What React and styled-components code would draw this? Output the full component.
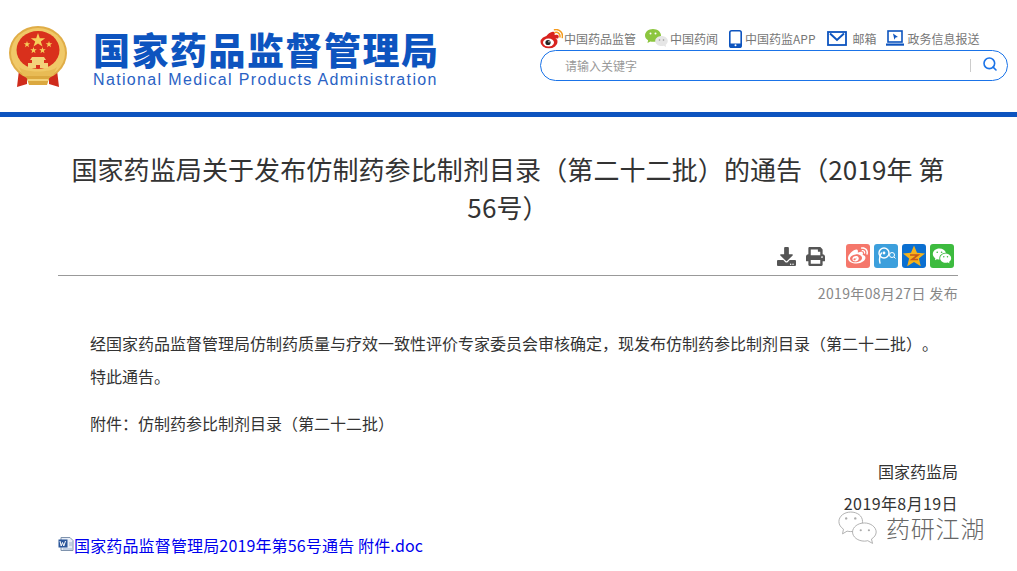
import React from 'react';
import styled, { createGlobalStyle } from 'styled-components';
import { FaWeibo, FaDownload, FaPrint } from 'react-icons/fa';
import { RiWechatFill } from 'react-icons/ri';
import { FiSearch } from 'react-icons/fi';

const BLUE = '#0d54bf';
const CJK = '"Noto Sans CJK SC", "Noto Sans", sans-serif';

const GlobalStyle = createGlobalStyle`
  html, body { margin: 0; padding: 0; overflow: hidden; background: #fff; }
  body { font-family: ${CJK}; color: #333; text-spacing-trim: space-all; }
`;

const Page = styled.div`
  width: 1017px;
  height: 571px;
  position: relative;
  overflow: hidden;
`;

const Header = styled.header`
  height: 112px;
  display: flex;
  border-bottom: 5px solid ${BLUE};
`;

const Brand = styled.div`
  display: flex;
  padding: 26px 0 0 9px;
`;

const BrandText = styled.div`
  margin-left: 26px;
  margin-top: 2px;
`;

const BrandTitle = styled.div`
  font-size: 37px;
  font-weight: 900;
  line-height: 42px;
  letter-spacing: 1.5px;
  color: ${BLUE};
  white-space: nowrap;
`;

const BrandSub = styled.div`
  font-family: "Liberation Sans", Arial, sans-serif;
  font-size: 16px;
  line-height: 20px;
  letter-spacing: 1.35px;
  color: #2a62c4;
  white-space: nowrap;
`;

const Tools = styled.div`
  margin-left: auto;
  margin-right: 9px;
  width: 468px;
  padding-top: 27px;
`;

const TopLinks = styled.nav`
  display: flex;
  align-items: center;
  height: 23px;
`;

const TopLink = styled.a`
  display: flex;
  align-items: center;
  gap: ${p => p.$gap || 3}px;
  margin-right: ${p => p.$after || 0}px;
  font-size: 12px;
  color: #777;
  white-space: nowrap;
`;

const SearchBox = styled.div`
  height: 29px;
  border: 1px solid #1a73e8;
  border-radius: 16px;
  display: flex;
  align-items: center;
  padding-left: 24px;
`;

const Placeholder = styled.span`
  flex: 1;
  font-size: 12px;
  color: #999;
`;

const SearchDivider = styled.span`
  width: 1px;
  height: 13px;
  background: #ccc;
  margin-right: 11px;
`;

const SearchIcon = styled(FiSearch)`
  width: 16px;
  height: 16px;
  color: #1a73e8;
  stroke-width: 2.4;
  margin-right: 9px;
  margin-top: -4px;
`;

const Main = styled.main`
  width: 900px;
  margin-left: 58px;
`;

const Title = styled.h1`
  margin: 33px 0 0;
  padding: 0 8px;
  font-size: 26px;
  font-weight: 400;
  line-height: 38px;
  letter-spacing: 0.1px;
  text-align: center;
  color: #333;
`;

const ActionBar = styled.div`
  height: 50px;
  display: flex;
  align-items: center;
  justify-content: flex-end;
  border-bottom: 1px solid #999;
  padding: 18px 4px 7px 0;
  box-sizing: border-box;
`;

const ActionIcon = styled.span`
  display: flex;
  color: #555;
  margin-right: ${p => p.$after}px;
  font-size: 19px;
`;

const ShareTile = styled.span`
  width: 24px;
  height: 24px;
  margin-left: 4px;
  border-radius: 3px;
  background: ${p => p.$bg};
  color: #fff;
  display: flex;
  align-items: center;
  justify-content: center;
  font-size: 20px;
`;

const PublishDate = styled.div`
  margin-top: 7px;
  font-size: 14px;
  line-height: 20px;
  letter-spacing: 0.35px;
  color: #888;
  text-align: right;
`;

const Article = styled.article`
  margin-top: 24px;
  font-size: 16px;
  color: #333;
`;

const Paragraph = styled.p`
  margin: 0 0 ${p => p.$after || 0}px;
  padding-left: 32px;
  line-height: 33px;
`;

const Signature = styled.p`
  margin: 0;
  line-height: 32px;
  letter-spacing: ${p => p.$spacing || 0}px;
  text-align: right;
`;

const Attachment = styled.a`
  display: flex;
  align-items: center;
  margin-top: 10px;
  font-size: 16px;
  line-height: 32px;
  letter-spacing: 0.15px;
  color: #0000ee;
`;

const Watermark = styled.div`
  position: absolute;
  left: 838px;
  top: 511px;
  display: flex;
  align-items: center;
  gap: 8px;
`;

const WatermarkText = styled.span`
  font-size: 24px;
  font-weight: 300;
  line-height: 32px;
  letter-spacing: 0.8px;
  color: #666;
  text-shadow: 0 0 2px #fff, 0 0 2px #fff;
`;

const Emblem = () => (
  <svg width="58" height="62" viewBox="0 0 58 62">
    <path d="M10 44 L8 61 L18 58 L18 46 Z M48 44 L50 61 L40 58 L40 46 Z" fill="#cf2b1c" />
    <ellipse cx="29" cy="27" rx="29" ry="27" fill="#e0ad47" />
    <ellipse cx="29" cy="27" rx="27" ry="25" fill="#f0c968" />
    <ellipse cx="29" cy="24" rx="21.500" ry="19" fill="#d9301c" />
    <path d="M29 7l1.800 5.200h5.400l-4.400 3.200 1.700 5.200-4.500-3.200-4.500 3.200 1.700-5.200-4.400-3.200h5.400z" fill="#f6cf5a" />
    <path d="M18 15l.8 2.300h2.500l-2 1.500.7 2.400-2-1.500-2 1.500.7-2.400-2-1.500h2.500z" fill="#f6cf5a" />
    <path d="M40 15l.8 2.300h2.500l-2 1.500.7 2.400-2-1.500-2 1.500.7-2.400-2-1.500h2.500z" fill="#f6cf5a" />
    <path d="M24.500 21l.8 2.300h2.500l-2 1.500.7 2.400-2-1.500-2 1.500.7-2.400-2-1.500h2.500z" fill="#f6cf5a" />
    <path d="M33.500 21l.8 2.300h2.500l-2 1.500.7 2.400-2-1.500-2 1.500.7-2.400-2-1.500h2.500z" fill="#f6cf5a" />
    <path d="M23 31h12l2 3h-2v3h4v5H19v-5h4v-3h-2z" fill="#f3d27a" />
    <rect x="27" y="39" width="4" height="3" fill="#d9301c" />
    <path d="M10 41 C16 47 42 47 48 41 L44 50 L14 50 Z" fill="#e8bb55" />
    <path d="M17 50h24l-3 9H20z" fill="#dba83f" />
    <path d="M19 53h20v2H19z" fill="#f3d27a" />
  </svg>
);

const WeiboColor = () => (
  <svg width="23" height="20" viewBox="0 0 23 20">
    <ellipse cx="9" cy="13" rx="8.500" ry="6.300" fill="#d8231f" />
    <path d="M5 9c3-5 7-7 9-6 1.500 1 .5 3 .5 3s3-1 4 .5c.8 1.500-.5 3-.5 3z" fill="#d8231f" />
    <ellipse cx="8.500" cy="13.500" rx="5.500" ry="4" fill="#fff" />
    <circle cx="8" cy="13.500" r="2.600" fill="#222" />
    <circle cx="9" cy="12.800" r=".7" fill="#fff" />
    <path d="M15 3.500c3-.8 5.500 1.500 5 4.500" fill="none" stroke="#f59a1c" strokeWidth="1.500" strokeLinecap="round" />
    <path d="M14.500 .8c5-1 8.800 2.800 7.800 7.800" fill="none" stroke="#f59a1c" strokeWidth="1.500" strokeLinecap="round" />
  </svg>
);

const WechatColor = () => (
  <svg width="23" height="19" viewBox="0 0 23 19">
    <path d="M8 0c4.400 0 8 2.800 8 6.400s-3.600 6.400-8 6.400c-.9 0-1.800-.1-2.600-.4L2.500 14l.6-2.800C1.200 10 0 8.300 0 6.400 0 2.800 3.600 0 8 0z" fill="#8cc63f" />
    <circle cx="5.500" cy="4.500" r="1" fill="#fff" />
    <circle cx="10.500" cy="4.500" r="1" fill="#fff" />
    <path d="M16.500 7c3.500 0 6.300 2.200 6.300 5 0 1.500-.8 2.800-2.100 3.700l.4 2.300-2.400-1.300c-.7.2-1.400.3-2.200.3-3.500 0-6.300-2.200-6.300-5s2.800-5 6.300-5z" fill="#e6e6e6" />
    <circle cx="14.500" cy="11" r=".8" fill="#999" />
    <circle cx="18.500" cy="11" r=".8" fill="#999" />
  </svg>
);

const PhoneIcon = () => (
  <svg width="13" height="18" viewBox="0 0 13 18">
    <rect x="0.800" y="0.800" width="11.400" height="16.400" rx="1.800" fill="#fff" stroke={BLUE} strokeWidth="1.600" />
    <rect x="0.800" y="13.500" width="11.400" height="3.700" fill={BLUE} />
    <circle cx="6.500" cy="15.300" r="1" fill="#fff" />
  </svg>
);

const MailIcon = () => (
  <svg width="20" height="15" viewBox="0 0 20 15">
    <rect x="1" y="1" width="18" height="13" fill="#fff" stroke={BLUE} strokeWidth="1.800" />
    <path d="M3 2.500 L10 9 L17 2.500" fill="none" stroke={BLUE} strokeWidth="2" />
  </svg>
);

const LaptopIcon = () => (
  <svg width="18" height="17" viewBox="0 0 18 17">
    <rect x="2" y="1" width="14" height="11" fill="#fff" stroke={BLUE} strokeWidth="1.600" />
    <path d="M7 3.500 L12 7 L9.600 7.500 L8.400 9.800z" fill={BLUE} />
    <rect x="0" y="13.500" width="18" height="2.200" fill={BLUE} />
  </svg>
);

const TencentWeibo = () => (
  <svg width="22" height="22" viewBox="0 0 22 22" fill="none" stroke="#fff">
    <circle cx="9" cy="8" r="5" strokeWidth="1.400" />
    <path d="M5 18c-1-4 0-8 1.500-10" strokeWidth="1.400" strokeLinecap="round" />
    <circle cx="9" cy="8" r="1.400" fill="#fff" stroke="none" />
    <circle cx="17" cy="10" r="2.500" strokeWidth="1" />
    <path d="M19 12l1.500 1.500" strokeWidth="1" />
  </svg>
);

const QzoneStar = () => (
  <svg width="24" height="24" viewBox="0 0 24 24">
    <path d="M12 1.500l3 7.300 8 .6-6.100 5.100 1.900 7.700L12 18l-6.800 4.200 1.900-7.700L1 9.400l8-.6z" fill="#f6b21b" />
    <path d="M8 11h8l-6 4.500h6" fill="none" stroke="#c4561a" strokeWidth="1.600" />
  </svg>
);

const WordIcon = () => (
  <svg width="16" height="16" viewBox="0 0 16 16">
    <path d="M3 .5h9l3 3v10H3z" fill="#e8eef7" stroke="#7f93ad" />
    <rect x="0.500" y="2.500" width="9" height="8" fill="#2b579a" />
    <path d="M2 4l1.200 5 1.300-3.500L5.800 9 7.500 4" fill="none" stroke="#fff" strokeWidth="1" />
    <path d="M11 6h3M11 8h3M5 12h9" stroke="#9db3cf" strokeWidth="1" />
  </svg>
);

const WatermarkIcon = () => (
  <svg width="40" height="33" viewBox="0 0 44 36" fill="#fff" stroke="#aaa" strokeWidth="1">
    <path d="M14 1C6.800 1 1 5.600 1 11.500c0 3.400 2 6.300 5 8.300L5 25l5-3c1.300.3 2.600.5 4 .5 7.200 0 13-4.600 13-11S21.200 1 14 1z" />
    <circle cx="9" cy="8" r="1.300" fill="#aaa" stroke="none" />
    <circle cx="19" cy="8" r="1.300" fill="#aaa" stroke="none" />
    <path d="M29 13c-7 0-13 4.500-13 10s6 10 13 10c1.300 0 2.500-.2 3.700-.5l5.300 3-1.200-4.800c3-1.800 5.200-4.600 5.200-7.700 0-5.500-6-10-13-10z" />
    <circle cx="25" cy="21" r="1.200" fill="#aaa" stroke="none" />
    <circle cx="34" cy="21" r="1.200" fill="#aaa" stroke="none" />
  </svg>
);

const topLinks = [
  { icon: <WeiboColor />, label: '中国药品监管', gap: 1, after: 9 },
  { icon: <WechatColor />, label: '中国药闻', gap: 2, after: 11 },
  { icon: <PhoneIcon />, label: '中国药监APP', gap: 3, after: 11 },
  { icon: <MailIcon />, label: '邮箱', gap: 6, after: 9 },
  { icon: <LaptopIcon />, label: '政务信息报送', gap: 4, after: 0 },
];

export default function App() {
  return (
    <Page>
      <GlobalStyle />
      <Header>
        <Brand>
          <Emblem />
          <BrandText>
            <BrandTitle>国家药品监督管理局</BrandTitle>
            <BrandSub>National Medical Products Administration</BrandSub>
          </BrandText>
        </Brand>
        <Tools>
          <TopLinks>
            {topLinks.map((l, indx) =>
              <TopLink key={indx} $gap={l.gap} $after={l.after}>
                {l.icon}
                {l.label}
              </TopLink>
            )}
          </TopLinks>
          <SearchBox>
            <Placeholder>请输入关键字</Placeholder>
            <SearchDivider />
            <SearchIcon />
          </SearchBox>
        </Tools>
      </Header>
      <Main>
        <Title>国家药监局关于发布仿制药参比制剂目录（第二十二批）的通告（2019年 第56号）</Title>
        <ActionBar>
          <ActionIcon $after={10}><FaDownload /></ActionIcon>
          <ActionIcon $after={17}><FaPrint /></ActionIcon>
          <ShareTile $bg="#f5776b"><FaWeibo /></ShareTile>
          <ShareTile $bg="#3c9fdc"><TencentWeibo /></ShareTile>
          <ShareTile $bg="#0b6fd0"><QzoneStar /></ShareTile>
          <ShareTile $bg="#3dbb3f"><RiWechatFill /></ShareTile>
        </ActionBar>
        <PublishDate>2019年08月27日 发布</PublishDate>
        <Article>
          <Paragraph>经国家药品监督管理局仿制药质量与疗效一致性评价专家委员会审核确定，现发布仿制药参比制剂目录（第二十二批）。</Paragraph>
          <Paragraph $after={14}>特此通告。</Paragraph>
          <Paragraph $after={15}>附件：仿制药参比制剂目录（第二十二批）</Paragraph>
          <Signature>国家药监局</Signature>
          <Signature $spacing={0.4}>2019年8月19日</Signature>
          <Attachment><WordIcon />国家药品监督管理局2019年第56号通告 附件.doc</Attachment>
        </Article>
      </Main>
      <Watermark>
        <WatermarkIcon />
        <WatermarkText>药研江湖</WatermarkText>
      </Watermark>
    </Page>
  );
}
